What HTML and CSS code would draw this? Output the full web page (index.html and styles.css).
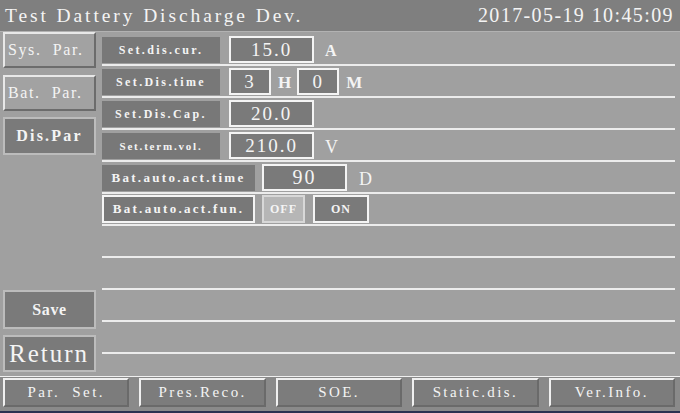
FILE: index.html
```html
<!DOCTYPE html>
<html lang="en">
<head>
    <meta charset="UTF-8">
    <meta name="viewport" content="width=device-width, initial-scale=1.0">
    <title>Test Dattery Discharge Dev.</title>
    <link rel="stylesheet" href="styles.css">
</head>
<body>
    <div class="screen">
        <div class="titlebar">
            <span class="title">Test Dattery Discharge Dev.</span>
            <span class="clock">2017-05-19 10:45:09</span>
        </div>

        <div class="main">
            <div class="side">
                <div class="side-btn">Sys.  Par.</div>
                <div class="side-btn">Bat.  Par.</div>
                <div class="side-btn active">Dis.Par</div>
                <div class="side-btn save">Save</div>
                <div class="side-btn return">Return</div>
            </div>

            <div class="content">
                <div class="row">
                    <div class="label">Set.dis.cur.</div>
                    <div class="value">15.0</div>
                    <span class="unit">A</span>
                </div>
                <div class="row">
                    <div class="label">Set.Dis.time</div>
                    <div class="value small">3</div>
                    <span class="unit unit-h">H</span>
                    <div class="value small value-m">0</div>
                    <span class="unit unit-m">M</span>
                </div>
                <div class="row">
                    <div class="label">Set.Dis.Cap.</div>
                    <div class="value">20.0</div>
                </div>
                <div class="row">
                    <div class="label label-narrow">Set.term.vol.</div>
                    <div class="value">210.0</div>
                    <span class="unit unit-thin">V</span>
                </div>
                <div class="row">
                    <div class="label wide">Bat.auto.act.time</div>
                    <div class="value value-wide">90</div>
                    <span class="unit unit-thin unit-d">D</span>
                </div>
                <div class="row">
                    <div class="label wide framed">Bat.auto.act.fun.</div>
                    <div class="toggle off">OFF</div>
                    <div class="toggle on">ON</div>
                </div>
                <div class="row"></div>
                <div class="row"></div>
                <div class="row"></div>
                <div class="row"></div>
            </div>
        </div>

        <div class="bottombar">
            <div class="tab">Par.  Set.</div>
            <div class="tab">Pres.Reco.</div>
            <div class="tab">SOE.</div>
            <div class="tab">Static.dis.</div>
            <div class="tab">Ver.Info.</div>
        </div>
        <div class="edge"></div>
    </div>
</body>
</html>
```

FILE: styles.css
```css
body {
    margin: 0;
    background-color: #a0a0a0;
    font-family: 'Liberation Serif', serif;
    color: #f4f4f4;
}
.screen {
    width: 680px;
    height: 413px;
    display: flex;
    flex-direction: column;
    overflow: hidden;
    background-color: #a0a0a0;
}
.titlebar {
    height: 31px;
    border-bottom: 1px solid #b2b2b2;
    background-color: #7f7f7f;
    display: flex;
    align-items: center;
    justify-content: space-between;
    padding: 0 7px 0 5px;
    flex-shrink: 0;
}
.title {
    font-size: 19.5px;
    letter-spacing: 2.9px;
}
.clock {
    font-size: 20px;
    letter-spacing: 1.4px;
    margin-right: -1px;
}
.main {
    height: 344px;
    display: flex;
    flex-shrink: 0;
}
.side {
    width: 99px;
    padding-left: 3px;
    display: flex;
    flex-direction: column;
    gap: 7px;
}
.side-btn {
    width: 93px;
    height: 36px;
    box-sizing: border-box;
    border: 2px solid #e8e8e8;
    border-right-color: #6c6c6c;
    border-bottom-color: #6c6c6c;
    background-color: #a2a2a2;
    display: flex;
    align-items: center;
    padding-left: 3px;
    font-size: 16px;
    letter-spacing: 1.6px;
    white-space: pre;
}
.side-btn.active {
    height: 38px;
    margin-top: -1px;
    background-color: #7a7a7a;
    border-color: #bcbcbc;
    justify-content: center;
    padding-left: 0;
    font-weight: bold;
    letter-spacing: 2.2px;
}
.side-btn.save {
    margin-top: auto;
    height: 39px;
    background-color: #7a7a7a;
    border-color: #bcbcbc;
    justify-content: center;
    padding-left: 0;
    font-weight: bold;
    font-size: 16px;
    letter-spacing: 0.6px;
}
.side-btn.return {
    height: 37px;
    margin-top: -1px;
    margin-bottom: 4px;
    background-color: #7a7a7a;
    border-color: #bcbcbc;
    padding-left: 4px;
    font-size: 25px;
    letter-spacing: 2px;
}
.content {
    width: 573px;
    padding-top: 2px;
}
.row {
    height: 32px;
    box-sizing: border-box;
    border-bottom: 2px solid #ececec;
    display: flex;
    align-items: flex-end;
    padding-bottom: 1px;
}
.label {
    width: 118px;
    height: 26px;
    box-sizing: border-box;
    background-color: #787878;
    display: flex;
    align-items: center;
    justify-content: center;
    font-size: 12px;
    font-weight: bold;
    letter-spacing: 2.4px;
}
.label-narrow {
    font-size: 11px;
    letter-spacing: 1.8px;
}
.label.wide {
    width: 153px;
    font-size: 13px;
    letter-spacing: 2.3px;
}
.label.framed {
    height: 28px;
    border: 2px solid #f4f4f4;
}
.value {
    width: 85px;
    height: 27px;
    margin-left: 9px;
    box-sizing: border-box;
    border: 2px solid #f4f4f4;
    background-color: #7a7a7a;
    display: flex;
    align-items: center;
    justify-content: center;
    font-size: 19px;
    letter-spacing: 2px;
}
.value.small {
    width: 42px;
}
.value.value-m {
    margin-left: 6px;
}
.value.value-wide {
    margin-left: 7px;
    font-size: 20px;
}
.unit {
    margin-left: 11px;
    height: 24px;
    font-weight: bold;
    font-size: 16px;
    line-height: 24px;
}
.unit-h {
    margin-left: 7px;
    font-size: 17px;
}
.unit-m {
    margin-left: 7px;
    font-size: 17px;
}
.unit-thin {
    font-weight: normal;
    font-size: 18px;
}
.unit-d {
    margin-left: 12px;
}
.toggle {
    height: 28px;
    box-sizing: border-box;
    border: 2px solid #f4f4f4;
    display: flex;
    align-items: center;
    justify-content: center;
    font-weight: bold;
    font-size: 12px;
    letter-spacing: 1px;
}
.toggle.off {
    width: 43px;
    margin-left: 7px;
    background-color: #b6b6b6;
    border-color: #d8d8d8;
}
.toggle.on {
    width: 56px;
    margin-left: 8px;
    background-color: #7a7a7a;
}
.bottombar {
    height: 31px;
    border-top: 1px solid #f0f0f0;
    background-color: #8a8a8a;
    display: flex;
    gap: 10px;
    padding: 1px 5px 0 3px;
    flex-shrink: 0;
}
.tab {
    flex: 1;
    height: 29px;
    box-sizing: border-box;
    border: 2px solid #f0f0f0;
    border-right-color: #6a6a6a;
    border-bottom-color: #6a6a6a;
    background-color: #7c7c7c;
    display: flex;
    align-items: center;
    justify-content: center;
    font-size: 15px;
    letter-spacing: 2.4px;
    white-space: pre;
}
.edge {
    flex: 1;
    background-color: #2b3150;
    border-top: 2px solid #8a8a8a;
}
```
